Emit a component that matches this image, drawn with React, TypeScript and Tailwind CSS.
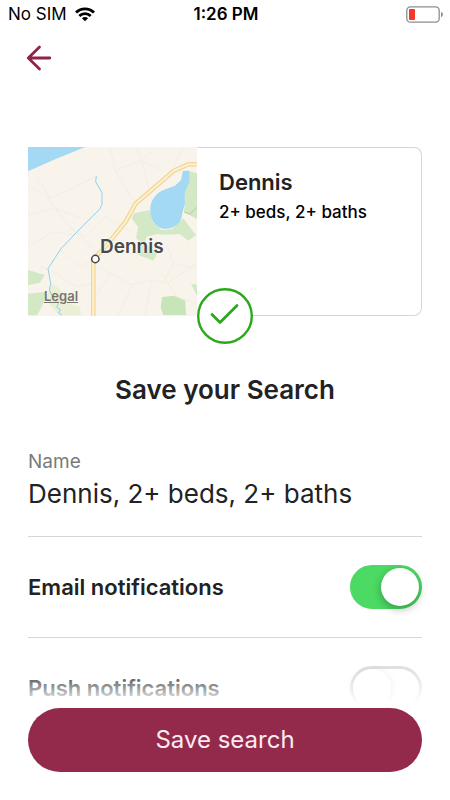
import { useState } from 'react';

interface ToggleRowProps {
  id: string;
  label: string;
  checked: boolean;
  onChange: (checked: boolean) => void;
}

function ToggleRow({ id, label, checked, onChange }: ToggleRowProps) {
  return (
    <div className="flex h-[101px] items-center justify-between border-b border-[#d6d6d6]">
      <label htmlFor={id} className="text-[22px] leading-7 font-semibold text-[#222222]">
        {label}
      </label>
      <input
        id={id}
        type="checkbox"
        role="switch"
        checked={checked}
        onChange={(e) => onChange(e.target.checked)}
        className="flex h-11 w-18 shrink-0 appearance-none items-center rounded-full border-3 border-[#e0e0e0] bg-white before:size-[38px] before:rounded-full before:bg-white before:shadow-[0_3px_8px_rgba(0,0,0,0.15)] checked:justify-end checked:border-[#4cd964] checked:bg-[#4cd964] checked:before:shadow-[0_3px_9px_rgba(0,0,0,0.3)]"
      />
    </div>
  );
}

function WifiIcon() {
  return (
    <svg viewBox="0 0 20 15" className="h-[15px] w-5" aria-hidden="true">
      <g fill="none" stroke="#000" strokeWidth="2.8">
        <path d="M1 5.6C6 .6 14 .6 19 5.6" />
        <path d="M4.3 9C7.5 5.8 12.5 5.8 15.7 9" />
      </g>
      <path d="M10 14.3 6.9 11.2c1.8-1.6 4.4-1.6 6.2 0z" />
    </svg>
  );
}

function BatteryIcon() {
  return (
    <svg viewBox="0 0 38 17" className="h-[17px] w-[38px]" aria-hidden="true">
      <rect x=".8" y=".8" width="32.4" height="15.4" rx="3.6" fill="#fff" stroke="#8e8e8e" strokeWidth="1.3" />
      <rect x="3" y="3" width="6" height="11" rx="1" fill="#f0382c" />
      <path d="M35 6c2.6.6 2.6 4.4 0 5z" fill="#8e8e8e" />
    </svg>
  );
}

function MapPreview() {
  return (
    <div className="relative size-[169px] shrink-0 overflow-hidden">
      <svg viewBox="24 21 507 507" className="size-full" aria-hidden="true">
        <rect x="24" y="21" width="507" height="507" fill="#f8f4ec" />
        {/* minor streets */}
        <g fill="none" stroke="#f3ede4" strokeWidth="3">
          <path d="M24 135 85 175 150 150 225 110M85 175l55 75 90 85M24 225l80-20 80 30M24 320l75-45 65 10M50 110l40 65M270 21l15 70 60 100M285 91l80-30 60 30M345 21l20 40 45-40M365 61l20 80M150 265l45 25 60-60 85 50M120 330l60 50 40-20M100 400l70 40 50-10M235 380l100 55 60-15 45 10 91-60M275 395l-45 70M335 435l-40 91M395 420l-20 106M440 310l20 60 71 15M460 370l-30 60M425 400l45 70 61 20M60 380l55 20M490 21l-30 60" />
        </g>
        {/* ocean */}
        <path d="M24 21H196L105 58 24 94Z" fill="#a3d9f2" />
        {/* parks */}
        <g fill="#d3e9c5">
          <path d="M343 220 388 210 400 250 425 270 455 268 490 235 520 275 528 285 505 302 480 282 435 284 412 282 380 290 375 310 412 340 400 362 355 345 362 305 348 295 354 260 335 235Z" />
          <path d="M508 94 531 100V238L492 216 496 175 485 150Z" />
          <path d="M24 390 74 405 60 428 24 436ZM24 461 80 455 70 490 52 526H24ZM513 431 531 434V468Z" />
          <path d="M426 471 463 467 496 482 498 525H430L422 504Z" fill="#c8e4b9" />
        </g>
        <path d="M93 430 118 445 145 488 181 502 182 526H115L80 480Z" fill="#eaf0d5" />
        <path d="M492 216 510 222 531 202" fill="none" stroke="#a9d49b" strokeWidth="3" />
        {/* pond */}
        <path d="M489 92H508V125L494 158 495 190 487 220C486 250 460 270 430 266 402 262 388 232 391 200 396 176 410 157 432 149L465 137 483 120Z" fill="#a3d9f2" />
        {/* creek */}
        <path d="M229 108 227 125 246 158 246 193 239 208 192 254 123 326 84 386 92 430 88 450 102 480 115 490 110 502 122 509 116 518 126 526" fill="none" stroke="#8fcff0" strokeWidth="3" />
        {/* main road */}
        <g fill="none" strokeLinejoin="round">
          <path d="M220 528V358L258 318 317 245 347 191 462 92 505 73H531" stroke="#f0cf8c" strokeWidth="13" />
          <path d="M220 528V358L258 318 317 245 347 191 462 92 505 73H531" stroke="#fdf1c9" strokeWidth="7" />
        </g>
        <circle cx="226" cy="357" r="11" fill="#fff" stroke="#444" strokeWidth="4.5" />
      </svg>
      <span className="absolute top-[88px] left-[72px] text-[19px] leading-6 font-semibold text-[#4a4a4a] [text-shadow:0_0_2px_#fff,0_0_2px_#fff]">
        Dennis
      </span>
      <a
        href="#legal"
        className="absolute bottom-3 left-4 text-[13px] leading-4 font-semibold text-[#77746e] underline"
      >
        Legal
      </a>
    </div>
  );
}

export default function App() {
  const [name, setName] = useState('Dennis, 2+ beds, 2+ baths');
  const [email, setEmail] = useState(true);
  const [push, setPush] = useState(false);

  return (
    <div className="flex h-dvh flex-col bg-white font-['Inter','Liberation_Sans',sans-serif] text-[#222222]">
      <div className="grid h-7 shrink-0 grid-cols-3 items-center pr-1.5 pl-2 text-[17px] leading-5 text-black">
        <div className="flex items-center gap-2">
          <span>No SIM</span>
          <WifiIcon />
        </div>
        <span className="text-center font-semibold">1:26 PM</span>
        <div className="flex justify-end">
          <BatteryIcon />
        </div>
      </div>

      <header className="flex h-15 shrink-0 items-center px-[26px]">
        <button type="button" aria-label="Back">
          <svg viewBox="0 0 26 26" className="size-[26px]" fill="none" stroke="#8e2549" strokeWidth="2.8" strokeLinecap="round" strokeLinejoin="round">
            <path d="M13.5 2 2.3 13l11.2 11M2.3 13h21.5" />
          </svg>
        </button>
      </header>

      <div className="relative min-h-0 flex-1">
        <main className="h-full overflow-y-auto px-7 pt-[59px] [scrollbar-width:none]">
          <section className="relative flex">
            <MapPreview />
            <div className="flex-1 rounded-r-lg border border-l-0 border-[#d6d6d6] px-[22px] pt-5">
              <h2 className="text-[22px] leading-7 font-semibold">Dennis</h2>
              <p className="mt-1 text-[17px] leading-6 font-medium text-black">2+ beds, 2+ baths</p>
            </div>
            <svg viewBox="0 0 56 56" className="absolute -bottom-7 left-1/2 size-14 -translate-x-1/2" fill="none" stroke="#2ba81c" strokeLinecap="round" strokeLinejoin="round" aria-hidden="true">
              <circle cx="28" cy="28" r="26.8" fill="#fff" strokeWidth="2.4" />
              <path d="M15 26.5 23 34.5 40 17.5" strokeWidth="2.8" />
            </svg>
          </section>

          <h1 className="mt-14 text-center text-[26px] leading-9 font-semibold">Save your Search</h1>

          <div className="mt-10 border-b border-[#d6d6d6] pb-6">
            <label htmlFor="search-name" className="block text-[19px] leading-7 text-[#7a7a7a]">
              Name
            </label>
            <input
              id="search-name"
              type="text"
              value={name}
              onChange={(e) => setName(e.target.value)}
              className="block h-9 w-full text-[26px] leading-9 outline-none"
            />
          </div>

          <ToggleRow id="email" label="Email notifications" checked={email} onChange={setEmail} />
          <ToggleRow id="push" label="Push notifications" checked={push} onChange={setPush} />
        </main>
        {/* fades the list out above the button */}
        <div className="pointer-events-none absolute inset-x-0 bottom-0 h-10 bg-linear-to-t from-white from-10% to-transparent" />
      </div>

      <footer className="shrink-0 px-7 pb-7">
        <button type="submit" className="h-16 w-full rounded-full bg-[#93294b] text-2xl text-[#fbeaf0]">
          Save search
        </button>
      </footer>
    </div>
  );
}
